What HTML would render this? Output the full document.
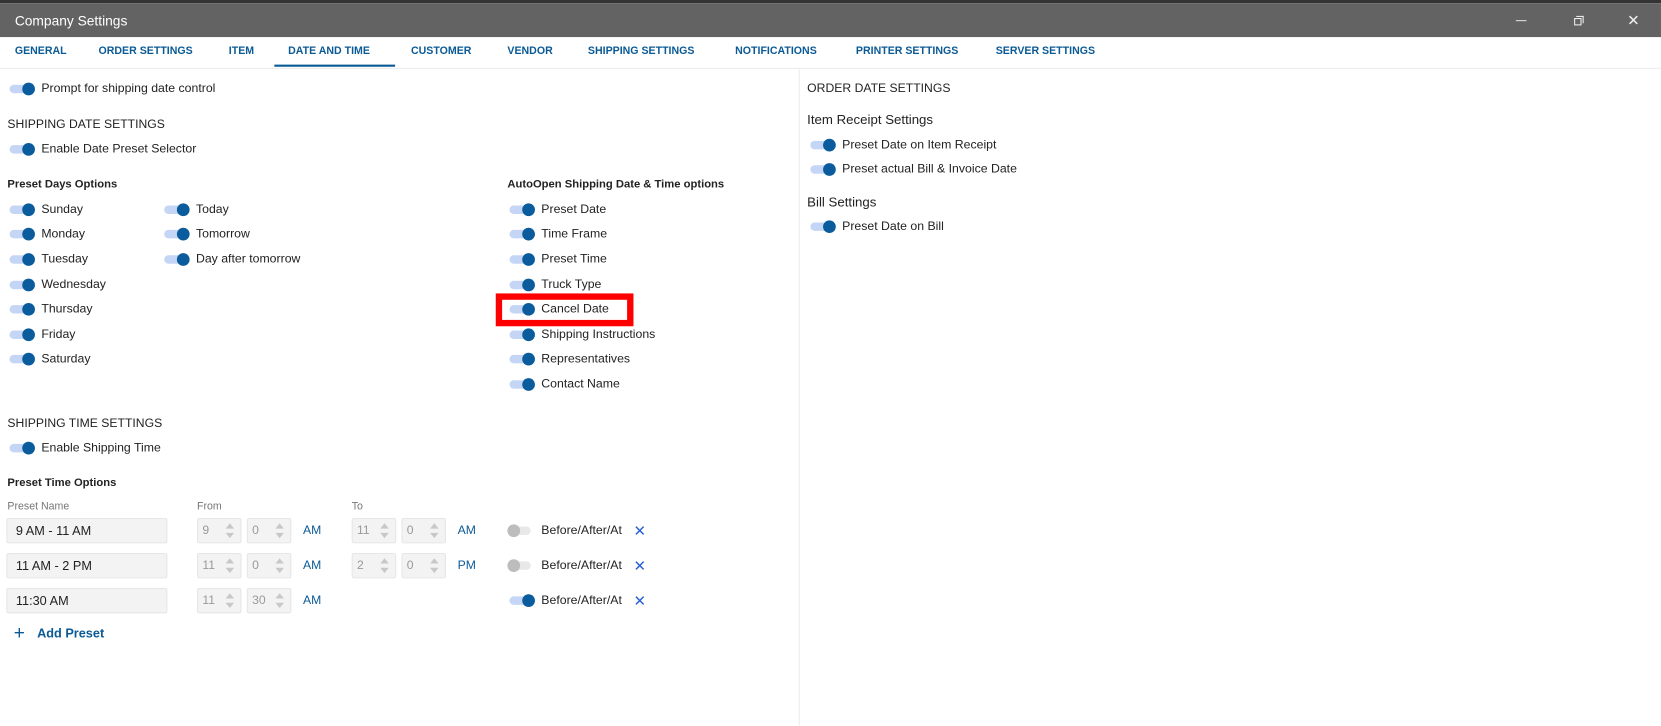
<!DOCTYPE html>
<html><head><meta charset="utf-8"><style>
*{margin:0;padding:0;box-sizing:border-box}
body{width:1661px;height:723px;background:#fff;position:relative;overflow:hidden;font-family:"Liberation Sans",sans-serif;font-size:11.6px;color:#222}
#w{position:absolute;left:0;top:0;width:1568px;height:683px;transform:scale(1.0593);transform-origin:0 0}
.a{position:absolute;white-space:nowrap;height:16px;line-height:16px}
.t{position:absolute;width:24px;height:12px}
.t::before{content:"";position:absolute;left:0;top:2px;width:22px;height:8px;border-radius:4px;background:#c5d5f5}
.t::after{content:"";position:absolute;left:12px;top:0;width:12px;height:12px;border-radius:6px;background:#0b5c9c}
.t.off::before{background:#e8e8e8}
.t.off::after{left:0;background:#bdbdbd}
.h{font-size:11.5px;color:#222}
.b{font-weight:bold;font-size:10.6px}
.tab{position:absolute;top:41px;font-weight:bold;font-size:10px;color:#0a5a96;height:16px;line-height:16px}
.box{position:absolute;height:24px;background:#f3f3f3;border:1px solid #e6e6e6;border-radius:2px;color:#9a9a9a;font-size:11.5px;line-height:22px;padding-left:4px}
.box.n{color:#222;padding-left:8px;font-size:12px}
.box .ar{position:absolute;right:6px;top:3px;width:8px;height:16px}
.ar::before{content:"";position:absolute;left:0;top:1px;border:4px solid transparent;border-bottom:5px solid #c8c8c8;border-top:0}
.ar::after{content:"";position:absolute;left:0;top:10px;border:4px solid transparent;border-top:5px solid #c8c8c8;border-bottom:0}
.am{position:absolute;color:#0a5a96;font-size:11.5px;height:16px;line-height:16px}
.x{position:absolute;color:#2a63d6;font-size:14px;line-height:16px;height:16px}
</style></head><body><div id="w">
<div style="position:absolute;left:0;top:0;width:1568px;height:3px;background:#333"></div>
<div style="position:absolute;left:0;top:3px;width:1568px;height:32px;background:#636363"></div>
<div class="a" style="left:14px;top:12px;color:#fff;font-size:13px">Company Settings</div>
<div style="position:absolute;left:1431px;top:19px;width:10px;height:1px;background:#ddd"></div>
<div style="position:absolute;left:1486px;top:17px;width:7px;height:7px;border:1px solid #eee"></div>
<div style="position:absolute;left:1488px;top:15px;width:7px;height:7px;border-top:1px solid #eee;border-right:1px solid #eee"></div>
<div class="a" style="left:1536px;top:11px;color:#eee;font-size:14px">✕</div>

<div class="tab" style="left:14px">GENERAL</div>
<div class="tab" style="left:93px">ORDER SETTINGS</div>
<div class="tab" style="left:216px">ITEM</div>
<div class="tab" style="left:272px">DATE AND TIME</div>
<div class="tab" style="left:388px">CUSTOMER</div>
<div class="tab" style="left:479px">VENDOR</div>
<div class="tab" style="left:555px">SHIPPING SETTINGS</div>
<div class="tab" style="left:694px">NOTIFICATIONS</div>
<div class="tab" style="left:808px">PRINTER SETTINGS</div>
<div class="tab" style="left:940px">SERVER SETTINGS</div>
<div style="position:absolute;left:259px;top:61px;width:114px;height:2px;background:#0a5a96"></div>
<div style="position:absolute;left:0;top:64px;width:1568px;height:1px;background:#ececec"></div>
<div style="position:absolute;left:754px;top:65px;width:1px;height:620px;background:#ececec"></div>

<div class="t" style="left:9px;top:78px"></div><div class="a" style="left:39px;top:76px">Prompt for shipping date control</div>
<div class="a h" style="left:7px;top:110px">SHIPPING DATE SETTINGS</div>
<div class="t" style="left:9px;top:135px"></div><div class="a" style="left:39px;top:133px">Enable Date Preset Selector</div>
<div class="a b" style="left:7px;top:166px">Preset Days Options</div>
<div class="t" style="left:9px;top:192px"></div><div class="a" style="left:39px;top:190px">Sunday</div>
<div class="t" style="left:9px;top:215px"></div><div class="a" style="left:39px;top:213px">Monday</div>
<div class="t" style="left:9px;top:239px"></div><div class="a" style="left:39px;top:237px">Tuesday</div>
<div class="t" style="left:9px;top:263px"></div><div class="a" style="left:39px;top:261px">Wednesday</div>
<div class="t" style="left:9px;top:286px"></div><div class="a" style="left:39px;top:284px">Thursday</div>
<div class="t" style="left:9px;top:310px"></div><div class="a" style="left:39px;top:308px">Friday</div>
<div class="t" style="left:9px;top:333px"></div><div class="a" style="left:39px;top:331px">Saturday</div>
<div class="t" style="left:155px;top:192px"></div><div class="a" style="left:185px;top:190px">Today</div>
<div class="t" style="left:155px;top:215px"></div><div class="a" style="left:185px;top:213px">Tomorrow</div>
<div class="t" style="left:155px;top:239px"></div><div class="a" style="left:185px;top:237px">Day after tomorrow</div>

<div class="a b" style="left:479px;top:166px">AutoOpen Shipping Date &amp; Time options</div>
<div class="t" style="left:481px;top:192px"></div><div class="a" style="left:511px;top:190px">Preset Date</div>
<div class="t" style="left:481px;top:215px"></div><div class="a" style="left:511px;top:213px">Time Frame</div>
<div class="t" style="left:481px;top:239px"></div><div class="a" style="left:511px;top:237px">Preset Time</div>
<div class="t" style="left:481px;top:263px"></div><div class="a" style="left:511px;top:261px">Truck Type</div>
<div class="t" style="left:481px;top:286px"></div><div class="a" style="left:511px;top:284px">Cancel Date</div>
<div class="t" style="left:481px;top:310px"></div><div class="a" style="left:511px;top:308px">Shipping Instructions</div>
<div class="t" style="left:481px;top:333px"></div><div class="a" style="left:511px;top:331px">Representatives</div>
<div class="t" style="left:481px;top:357px"></div><div class="a" style="left:511px;top:355px">Contact Name</div>
<div style="position:absolute;left:468px;top:277px;width:130px;height:31px;border:6px solid #f00"></div>

<div class="a h" style="left:7px;top:392px">SHIPPING TIME SETTINGS</div>
<div class="t" style="left:9px;top:417px"></div><div class="a" style="left:39px;top:415px">Enable Shipping Time</div>
<div class="a b" style="left:7px;top:448px">Preset Time Options</div>
<div class="a" style="left:7px;top:471px;color:#777;font-size:10px">Preset Name</div>
<div class="a" style="left:186px;top:471px;color:#777;font-size:10px">From</div>
<div class="a" style="left:332px;top:471px;color:#777;font-size:10px">To</div>

<div class="box n" style="left:6px;top:489px;width:152px">9 AM - 11 AM</div>
<div class="box" style="left:186px;top:489px;width:42px">9<span class="ar"></span></div>
<div class="box" style="left:233px;top:489px;width:42px">0<span class="ar"></span></div>
<div class="am" style="left:286px;top:493px">AM</div>
<div class="box" style="left:332px;top:489px;width:42px">11<span class="ar"></span></div>
<div class="box" style="left:379px;top:489px;width:42px">0<span class="ar"></span></div>
<div class="am" style="left:432px;top:493px">AM</div>
<div class="t off" style="left:479px;top:495px"></div><div class="a" style="left:511px;top:493px">Before/After/At</div><div class="x" style="left:598px;top:493px">✕</div>

<div class="box n" style="left:6px;top:522px;width:152px">11 AM - 2 PM</div>
<div class="box" style="left:186px;top:522px;width:42px">11<span class="ar"></span></div>
<div class="box" style="left:233px;top:522px;width:42px">0<span class="ar"></span></div>
<div class="am" style="left:286px;top:526px">AM</div>
<div class="box" style="left:332px;top:522px;width:42px">2<span class="ar"></span></div>
<div class="box" style="left:379px;top:522px;width:42px">0<span class="ar"></span></div>
<div class="am" style="left:432px;top:526px">PM</div>
<div class="t off" style="left:479px;top:528px"></div><div class="a" style="left:511px;top:526px">Before/After/At</div><div class="x" style="left:598px;top:526px">✕</div>

<div class="box n" style="left:6px;top:555px;width:152px">11:30 AM</div>
<div class="box" style="left:186px;top:555px;width:42px">11<span class="ar"></span></div>
<div class="box" style="left:233px;top:555px;width:42px">30<span class="ar"></span></div>
<div class="am" style="left:286px;top:559px">AM</div>
<div class="t" style="left:481px;top:561px"></div><div class="a" style="left:511px;top:559px">Before/After/At</div><div class="x" style="left:598px;top:559px">✕</div>

<div class="a" style="left:13px;top:589px;color:#0a5a96;font-size:18px">+</div>
<div class="a" style="left:35px;top:590px;color:#0a5a96;font-weight:bold;font-size:12px">Add Preset</div>

<div class="a h" style="left:762px;top:76px">ORDER DATE SETTINGS</div>
<div class="a" style="left:762px;top:105px;font-size:12.5px">Item Receipt Settings</div>
<div class="t" style="left:765px;top:131px"></div><div class="a" style="left:795px;top:129px">Preset Date on Item Receipt</div>
<div class="t" style="left:765px;top:154px"></div><div class="a" style="left:795px;top:152px">Preset actual Bill &amp; Invoice Date</div>
<div class="a" style="left:762px;top:183px;font-size:12.5px">Bill Settings</div>
<div class="t" style="left:765px;top:208px"></div><div class="a" style="left:795px;top:206px">Preset Date on Bill</div>
</div></body></html>
